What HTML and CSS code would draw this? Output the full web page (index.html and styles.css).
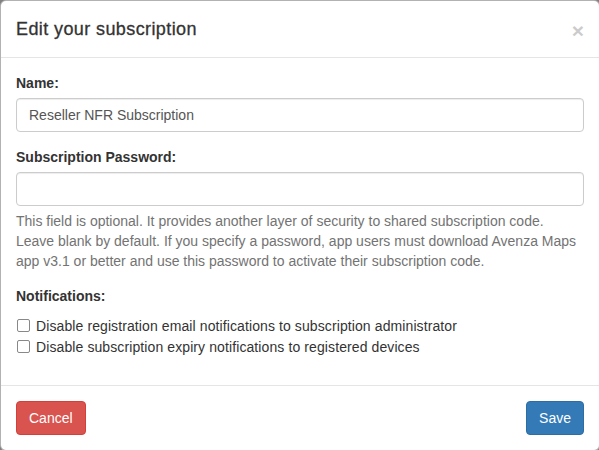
FILE: index.html
```html
<!DOCTYPE html>
<html lang="en">
<head>
  <meta charset="UTF-8">
  <meta name="viewport" content="width=device-width, initial-scale=1.0">
  <title>Edit your subscription</title>
  <link rel="stylesheet" href="styles.css">
</head>
<body>
  <div class="modal">
    <div class="modal-header">
      <h4 class="modal-title">Edit your subscription</h4>
      <button class="close" type="button">&times;</button>
    </div>

    <div class="modal-body">
      <div class="form-group">
        <label for="name">Name:</label>
        <input type="text" id="name" value="Reseller NFR Subscription">
      </div>

      <div class="form-group">
        <label for="password">Subscription Password:</label>
        <input type="text" id="password">
        <p class="help-block">This field is optional. It provides another layer of security to shared subscription code. Leave blank by default. If you specify a password, app users must download Avenza Maps app v3.1 or better and use this password to activate their subscription code.</p>
      </div>

      <div class="form-group last">
        <label>Notifications:</label>
        <div class="checkbox">
          <input type="checkbox" id="notifyAdmin">
          <span>Disable registration email notifications to subscription administrator</span>
        </div>
        <div class="checkbox">
          <input type="checkbox" id="notifyDevices">
          <span>Disable subscription expiry notifications to registered devices</span>
        </div>
      </div>
    </div>

    <div class="modal-footer">
      <button class="btn btn-danger" type="button">Cancel</button>
      <button class="btn btn-primary" type="button">Save</button>
    </div>
  </div>
</body>
</html>
```

FILE: styles.css
```css
* {
  box-sizing: border-box;
}
body {
  margin: 0;
  background: #808080;
  font-family: "Liberation Sans", Arial, sans-serif;
  font-size: 14px;
  line-height: 20px;
  color: #333;
}
.modal {
  width: 600px;
  background: white;
  border: 1px solid rgba(0,0,0,0.3);
  border-radius: 6px;
}
.modal-header {
  display: flex;
  justify-content: space-between;
  align-items: center;
  padding: 15px;
  border-bottom: 1px solid #e5e5e5;
}
.modal-title {
  margin: 0;
  font-size: 18px;
  font-weight: normal;
  line-height: 26px;
  letter-spacing: 0.4px;
  -webkit-text-stroke: 0.3px #333;
}
.close {
  background: none;
  border: none;
  padding: 0;
  margin: 2px 0 0;
  font-family: "Liberation Sans", Arial, sans-serif;
  font-size: 21px;
  font-weight: bold;
  line-height: 1;
  color: #000;
  opacity: 0.2;
}
.modal-body {
  padding: 15px;
}
.form-group {
  margin-bottom: 15px;
}
.form-group.last {
  margin-bottom: 13px;
}
label {
  display: block;
  margin-bottom: 5px;
  font-weight: bold;
}
input[type="text"] {
  display: block;
  width: 100%;
  height: 34px;
  padding: 6px 12px;
  font: inherit;
  color: #555;
  border: 1px solid #ccc;
  border-radius: 4px;
  box-shadow: inset 0 1px 1px rgba(0,0,0,0.075);
}
.help-block {
  margin: 5px 0 10px;
  color: #737373;
}
.checkbox {
  display: flex;
  align-items: center;
  height: 21px;
  letter-spacing: 0.1px;
}
.checkbox:first-of-type {
  margin-top: 9px;
}
.checkbox input {
  appearance: none;
  width: 13px;
  height: 13px;
  margin: 0 6px 0 1px;
  border: 1px solid #888;
  border-radius: 2px;
  background: white;
}
.modal-footer {
  display: flex;
  justify-content: space-between;
  padding: 15px;
  border-top: 1px solid #e5e5e5;
}
.btn {
  height: 34px;
  padding: 6px 12px;
  font-family: inherit;
  font-size: 14px;
  line-height: 20px;
  color: white;
  border: 1px solid transparent;
  border-radius: 4px;
}
.btn-danger {
  background-color: #d9534f;
  border-color: #d43f3a;
}
.btn-primary {
  background-color: #337ab7;
  border-color: #2e6da4;
}
```
